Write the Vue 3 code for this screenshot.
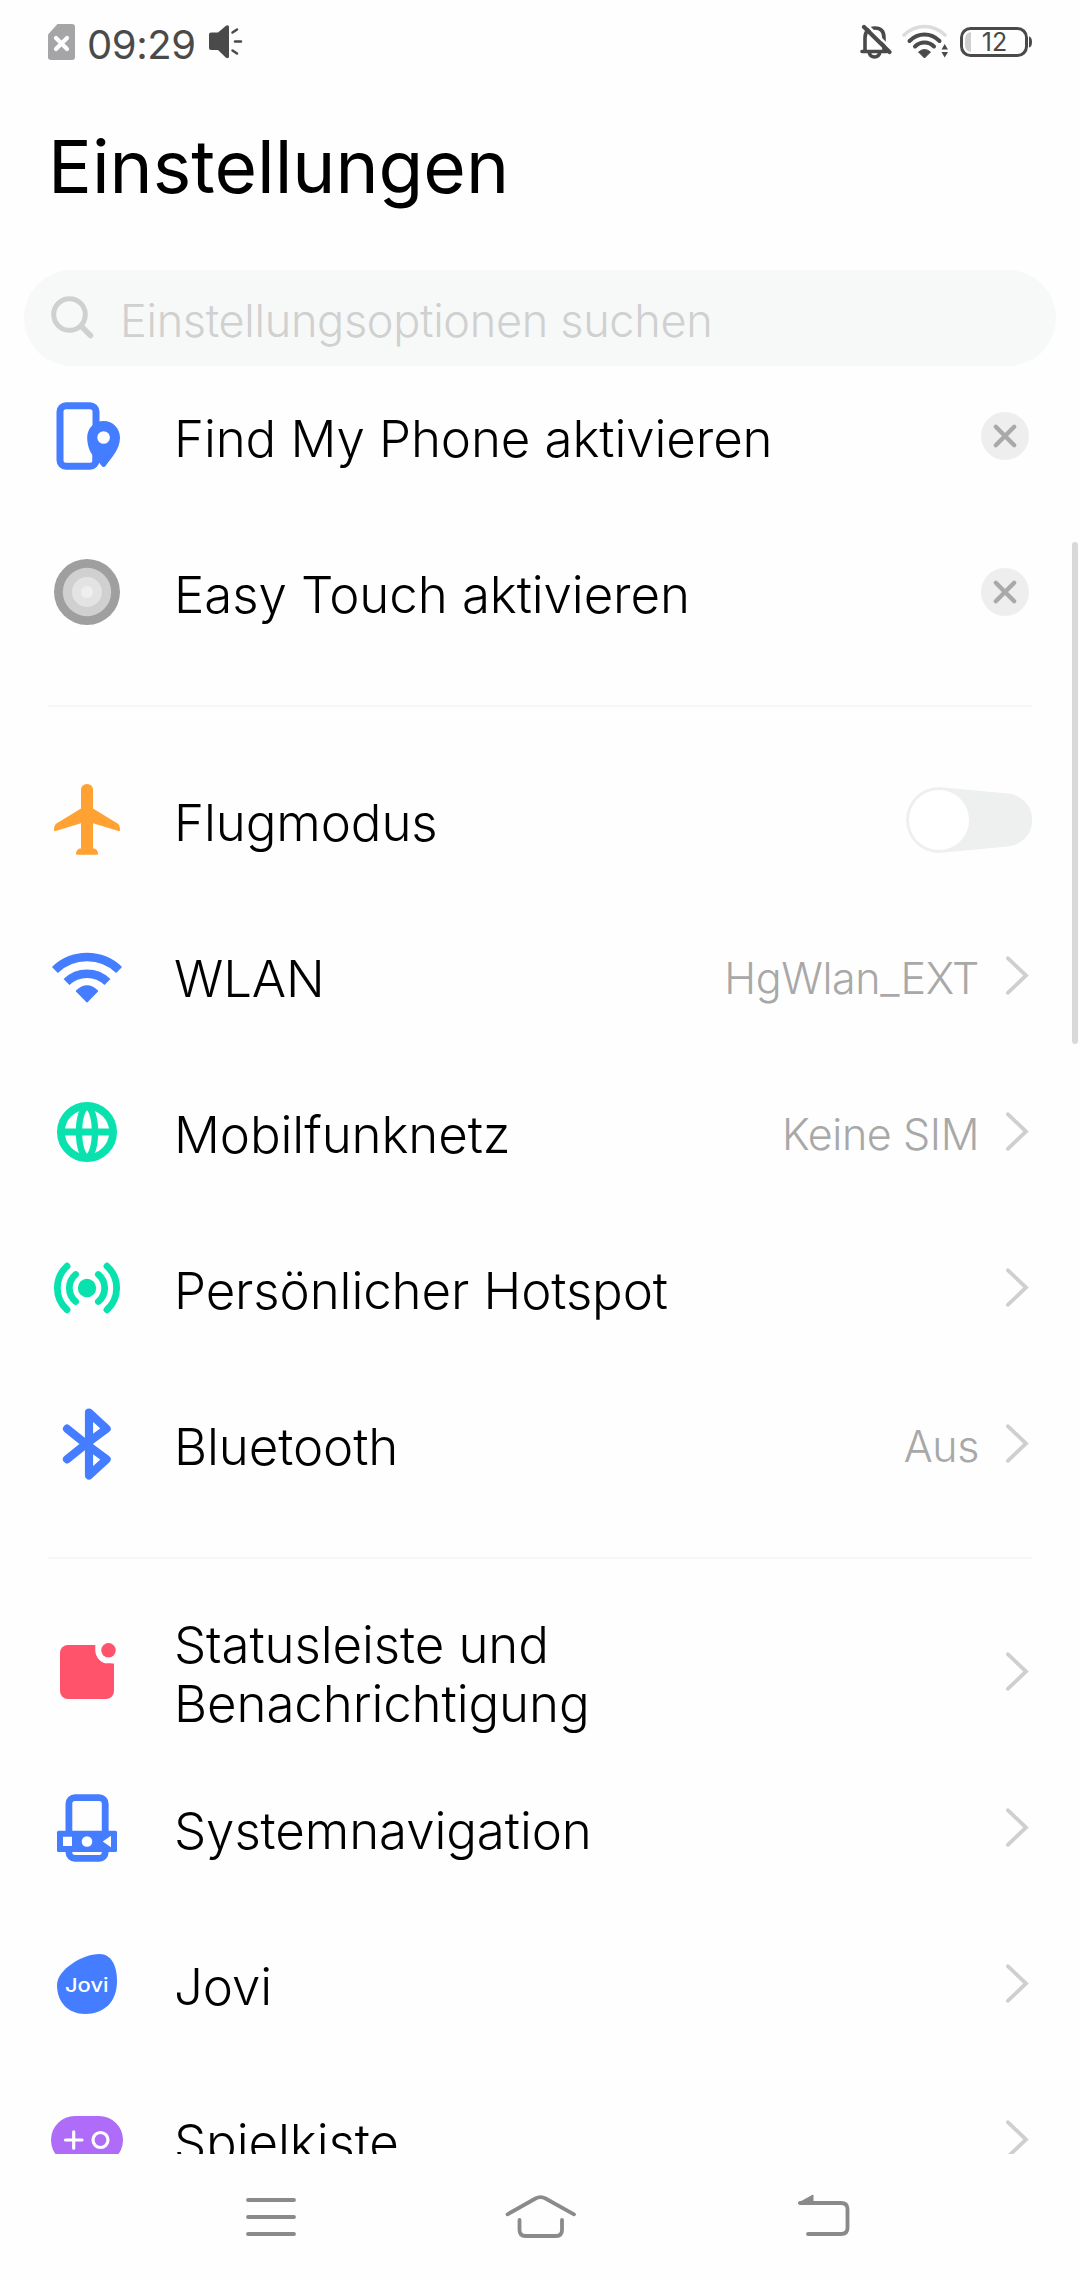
<template>
  <div class="screen">
    <header class="status">
      <div class="status-side">
        <svg class="sim" viewBox="0 0 27 36">
          <path d="M9.500 0H24a3 3 0 0 1 3 3V33a3 3 0 0 1-3 3H3a3 3 0 0 1-3-3V10.500Z" fill="#a5a4a6" />
          <path d="M8 14l11 11M19 14L8 25" stroke="#fff" stroke-width="4.200" stroke-linecap="round" />
        </svg>
        <span class="time">09:29</span>
        <svg class="speaker" viewBox="0 0 34 34">
          <path d="M2 7.500H9L17 .800Q20 -.500 20 2V31.500Q20 34 17 32.700L9 25H2Q0 25 0 23V9.500Q0 7.500 2 7.500Z" fill="#4a4a4a" />
          <path d="M23.500 7.500L28 4.500M26 16.500H32M23.500 25.500L28 28.500" stroke="#4a4a4a" stroke-width="2.500" stroke-linecap="round" />
        </svg>
      </div>
      <div class="status-side">
        <svg class="bell" viewBox="0 0 32 36">
          <path d="M5 27V14Q5 4 15 4Q24 4 24 14V27" fill="none" stroke="#4a4a4a" stroke-width="3.600" />
          <path d="M2 27.500H27M9 28Q10 33 14.500 33Q19 33 20 28" fill="none" stroke="#4a4a4a" stroke-width="3.600" stroke-linecap="round" />
          <path d="M7 1L32 25.500" stroke="#fefefe" stroke-width="2.500" />
          <path d="M4 3L29.500 28" stroke="#4a4a4a" stroke-width="4.200" stroke-linecap="round" />
        </svg>
        <svg class="signal" viewBox="0 0 47 36">
          <path d="M2 11Q11 2.500 22.500 2.500T43 11" fill="none" stroke="#dcdcdc" stroke-width="3.600" stroke-linecap="round" />
          <path d="M7.500 17Q14 10.500 22.500 10.500T37.500 17M13 22.500Q17 18.500 22.500 18.500T32 22.500" fill="none" stroke="#4a4a4a" stroke-width="4" stroke-linecap="round" />
          <path d="M16.500 28Q22.500 23 28.500 28L22.500 34Z" fill="#4a4a4a" stroke="#4a4a4a" stroke-linejoin="round" />
          <path d="M39.500 25.500L42.700 20L46 25.500ZM39.500 28L42.700 33.500L46 28Z" fill="#4a4a4a" />
        </svg>
        <svg class="battery" viewBox="0 0 72 30">
          <rect x="1.500" y="1.500" width="65" height="27" rx="9" fill="none" stroke="#4a4a4a" stroke-width="3" />
          <path d="M11 5V25Q5 24 5 18V12Q5 6 11 5Z" fill="#cfcfcf" />
          <path d="M69 9.500Q72 10 72 15T69 20.500Z" fill="#4a4a4a" />
          <text x="34.500" y="24" text-anchor="middle" class="battery-text">12</text>
        </svg>
      </div>
    </header>

    <h1>Einstellungen</h1>

    <div class="search">
      <svg viewBox="0 0 44 44">
        <circle cx="18.500" cy="18.500" r="15.800" fill="none" stroke="#cfd0cf" stroke-width="5" />
        <path d="M30.500 30.500L39.500 39.500" stroke="#cfd0cf" stroke-width="5.500" stroke-linecap="round" />
      </svg>
      <span>Einstellungsoptionen suchen</span>
    </div>

    <main class="list">
      <section v-for="(group, i) in groups" :key="i">
        <div v-for="item in group" :key="item.icon" class="row">
          <svg class="icon" viewBox="0 0 72 72">
            <g v-if="item.icon === 'find'">
              <rect x="9" y="5.800" width="36" height="60.400" rx="6" fill="none" stroke="#447dff" stroke-width="7" />
              <path d="M52.600 21C43 21 36.200 28.500 36.200 37.500C36.200 45 38.500 51 41.500 55V62.500H48L50.500 65.700Q52.600 68.300 54.700 65.700C61 57 69 49 69 37.500C69 28.500 62 21 52.600 21Z" fill="#447dff" />
              <circle cx="52.600" cy="37.500" r="6.300" fill="#fefefe" />
            </g>
            <g v-else-if="item.icon === 'touch'">
              <circle cx="36" cy="36" r="33" fill="#9f9f9f" />
              <circle cx="36" cy="36" r="24.200" fill="#cfd0cf" />
              <circle cx="36" cy="36" r="15" fill="#e3e3e3" />
              <circle cx="36" cy="36" r="6" fill="#efefef" />
            </g>
            <path
              v-else-if="item.icon === 'plane'"
              d="M36 0Q42 0 42 6.500V24.500L66.500 39.500Q69 41 69 46Q69 47.500 67.500 47L42 39.300V64.500H43.500Q47 66 47 69.500Q47 70.700 46 70.700H26Q25 70.700 25 69.500Q25 66 28.500 64.500H30V39.300L4.500 47Q3 47.500 3 46Q3 41 5.500 39.500L30 24.500V6.500Q30 0 36 0Z"
              fill="#ffa133"
            />
            <g v-else-if="item.icon === 'wlan'">
              <path d="M3.900 30A46.300 46.300 0 0 1 68.100 30M15.500 42A29.500 29.500 0 0 1 56.500 42" fill="none" stroke="#447dff" stroke-width="8.400" />
              <path d="M25.500 51Q36 41 46.500 51L36 61.800Z" fill="#447dff" stroke="#447dff" stroke-width="1.500" stroke-linejoin="round" />
            </g>
            <g v-else-if="item.icon === 'globe'" fill="none" stroke="#09e2ae">
              <circle cx="36" cy="36" r="26.100" stroke-width="7.800" />
              <ellipse cx="36" cy="36" rx="8" ry="25" stroke-width="6.400" />
              <path d="M10 36H62" stroke-width="7.200" />
            </g>
            <g v-else-if="item.icon === 'hotspot'">
              <circle cx="36" cy="36" r="9.200" fill="#09e2ae" />
              <path
                d="M16 14.200A29.500 29.500 0 0 0 16 57.800M56 14.200A29.500 29.500 0 0 1 56 57.800M24.600 22.500A17.700 17.700 0 0 0 24.600 49.500M47.400 22.500A17.700 17.700 0 0 1 47.400 49.500"
                fill="none"
                stroke="#09e2ae"
                stroke-width="6.800"
                stroke-linecap="round"
              />
            </g>
            <path
              v-else-if="item.icon === 'bluetooth'"
              d="M16 20.700L35 36L55.600 51.300L38 67.500V4.500L55.600 20.700L35 36L16 51.300"
              fill="none"
              stroke="#447dff"
              stroke-width="8.200"
              stroke-linejoin="round"
              stroke-linecap="round"
            />
            <g v-else-if="item.icon === 'notify'">
              <rect x="9" y="9" width="54" height="54" rx="8" fill="#ff526b" />
              <path d="M44.300 6V14.300A13.200 13.200 0 0 0 57.500 27.500H66V6Z" fill="#fefefe" />
              <path d="M55 27.500H59Q63 27.500 63 31V36H55Z" fill="#ff526b" />
              <circle cx="57.500" cy="14.300" r="7.200" fill="#ff526b" />
            </g>
            <g v-else-if="item.icon === 'nav'">
              <rect x="17.900" y="5.700" width="36.300" height="60.600" rx="6" fill="none" stroke="#447dff" stroke-width="6.800" />
              <rect x="6" y="38.700" width="60" height="21.300" rx="1.500" fill="#447dff" />
              <path d="M12 44.700H21V54H12ZM51.700 49.500L60 43.800V55.200Z" fill="#fff" />
              <circle cx="36" cy="49.500" r="5.300" fill="#fff" />
            </g>
            <g v-else-if="item.icon === 'jovi'">
              <path d="M48.500 6C61 6 66 19 66 33C66 54 53 66 34 66C17 66 6 54 6 37C6 22 31 6 48.500 6Z" fill="#447dff" />
              <text x="14" y="43.700" textLength="43.500" lengthAdjust="spacingAndGlyphs" class="jovi-text">Jovi</text>
            </g>
            <g v-else>
              <rect x="0" y="12" width="72" height="48" rx="24" fill="#ae6cf8" />
              <path d="M14.500 36H31M22.700 27.800V44.200" stroke="#fff" stroke-width="3.200" stroke-linecap="round" />
              <circle cx="49.500" cy="36" r="7.500" fill="none" stroke="#fff" stroke-width="3.200" />
            </g>
          </svg>
          <span class="label">{{ item.label }}</span>
          <span v-if="item.value" class="value">{{ item.value }}</span>
          <svg v-if="item.type === 'close'" class="close" viewBox="0 0 48 48" @click="dismiss(item)">
            <circle cx="24" cy="24" r="24" fill="#eee" />
            <path d="M14.800 14.800L33.200 33.200M33.200 14.800L14.800 33.200" stroke="#a9a9a9" stroke-width="4.400" stroke-linecap="round" />
          </svg>
          <svg v-else-if="item.type === 'switch'" class="switch" viewBox="0 0 126 66">
            <path d="M33 0L102 6.500A26.600 26.600 0 0 1 102 59.500L33 66A33 33 0 0 1 33 0Z" fill="#eef0ef" />
            <circle cx="33" cy="33" r="30" fill="#fff" />
          </svg>
          <svg v-else class="chevron" viewBox="0 0 26 40">
            <path d="M1.800 2.200L20 19.500L1.800 36.800" fill="none" stroke="#cfcfcf" stroke-width="3.800" stroke-linecap="round" />
          </svg>
        </div>
      </section>
    </main>
    <div class="scrollbar"></div>

    <nav class="navbar">
      <svg viewBox="0 0 80 60">
        <path d="M17 16H63M17 33H63M17 50H63" />
      </svg>
      <svg viewBox="0 0 80 60">
        <path d="M7.500 30.300L35.500 14.500Q40.500 11.800 45.500 14.500L74 30.300M19.500 36V46Q19.500 52 25.500 52H56Q62 52 62 46V36" />
      </svg>
      <svg viewBox="0 0 80 60">
        <path d="M17 19H58Q64.500 19 64.500 25V44Q64.500 50 58 50H25" />
        <path class="arrow" d="M15.500 19L30 11V19Z" />
      </svg>
    </nav>
  </div>
</template>

<script setup>
import { ref } from "vue";

const groups = ref([
  [
    { icon: "find", label: "Find My Phone aktivieren", type: "close" },
    { icon: "touch", label: "Easy Touch aktivieren", type: "close" },
  ],
  [
    { icon: "plane", label: "Flugmodus", type: "switch" },
    { icon: "wlan", label: "WLAN", value: "HgWlan_EXT" },
    { icon: "globe", label: "Mobilfunknetz", value: "Keine SIM" },
    { icon: "hotspot", label: "Persönlicher Hotspot" },
    { icon: "bluetooth", label: "Bluetooth", value: "Aus" },
  ],
  [
    { icon: "notify", label: "Statusleiste und Benachrichtigung" },
    { icon: "nav", label: "Systemnavigation" },
    { icon: "jovi", label: "Jovi" },
    { icon: "games", label: "Spielkiste" },
  ],
]);

const dismiss = (item) => {
  groups.value[0] = groups.value[0].filter((other) => other !== item);
};
</script>

<style>
body {
  background-color: #fefefe;
}
</style>

<style scoped>
.screen {
  position: relative;
  display: flex;
  flex-direction: column;
  width: 1080px;
  height: 2280px;
  overflow: hidden;
  background-color: #fefefe;
  color: #000;
  font-family: Inter, Roboto, sans-serif;
}

svg {
  flex: none;
  display: block;
}

.status {
  display: flex;
  justify-content: space-between;
  height: 84px;
  padding: 0 48px;
}

.status-side {
  display: flex;
  align-items: center;
}

.sim {
  width: 27px;
  height: 36px;
}

.time {
  margin: 5px 13px 0 12px;
  font-size: 40px;
  line-height: 48px;
  letter-spacing: -0.4px;
  color: #4a4a4a;
}

.speaker {
  width: 34px;
  height: 34px;
}

.bell {
  width: 32px;
  height: 36px;
  margin-right: 10px;
}

.signal {
  width: 47px;
  height: 36px;
  margin-right: 11px;
}

.battery {
  width: 72px;
  height: 30px;
}

.battery-text {
  font-size: 25px;
  fill: #4a4a4a;
}

h1 {
  height: 186px;
  margin: 0;
  padding: 39px 0 0 48px;
  box-sizing: border-box;
  font-size: 73px;
  line-height: 88px;
  font-weight: 400;
}

.search {
  display: flex;
  flex: none;
  align-items: center;
  height: 96px;
  margin: 0 24px;
  padding-left: 27px;
  box-sizing: border-box;
  border-radius: 48px;
  background-color: #f7f8f8;
}

.search svg {
  width: 44px;
  height: 44px;
}

.search span {
  margin: 4px 0 0 25px;
  font-size: 45px;
  font-weight: 320;
  letter-spacing: -0.3px;
  color: #cfd0cf;
}

.list {
  flex: 1;
  min-height: 0;
  overflow: hidden;
}

/* the first group is scrolled slightly under the search field */
section:first-child {
  margin-top: -8px;
}

section + section {
  margin-top: 35px;
}

section + section::before {
  content: "";
  display: block;
  height: 2px;
  margin: 0 48px 35px;
  background-color: #f6f6f6;
}

.row {
  display: flex;
  align-items: center;
  height: 156px;
  padding: 0 48px 0 51px;
}

.icon {
  width: 72px;
  height: 72px;
}

.label {
  max-width: 560px;
  margin: 4px auto 0 51px;
  font-size: 51px;
  line-height: 59px;
  font-weight: 330;
  letter-spacing: -0.1px;
}

.row:first-child .label {
  max-width: 700px;
}

.value {
  margin-top: 3px;
  margin-right: 27px;
  font-size: 43px;
  font-weight: 320;
  letter-spacing: -0.4px;
  color: #a8a8a8;
}

.close {
  width: 48px;
  height: 48px;
  margin-right: 3px;
}

.switch {
  width: 126px;
  height: 66px;
}

.chevron {
  width: 26px;
  height: 40px;
}

.jovi-text {
  font-size: 19px;
  font-weight: 500;
  fill: #fff;
}

.scrollbar {
  position: absolute;
  top: 542px;
  right: 2px;
  width: 6px;
  height: 502px;
  border-radius: 3px;
  background-color: #d9d9d9;
}

.navbar {
  display: flex;
  flex: none;
  gap: 189px;
  height: 126px;
  padding: 30px 0 0 231px;
  box-sizing: border-box;
}

.navbar svg {
  width: 80px;
  height: 60px;
}

.navbar svg:last-child {
  margin-left: 14px;
}

.navbar path {
  fill: none;
  stroke: #8a8a8a;
  stroke-width: 3.8;
  stroke-linecap: round;
  stroke-linejoin: round;
}

.navbar .arrow {
  fill: #8a8a8a;
  stroke-width: 1;
}
</style>
